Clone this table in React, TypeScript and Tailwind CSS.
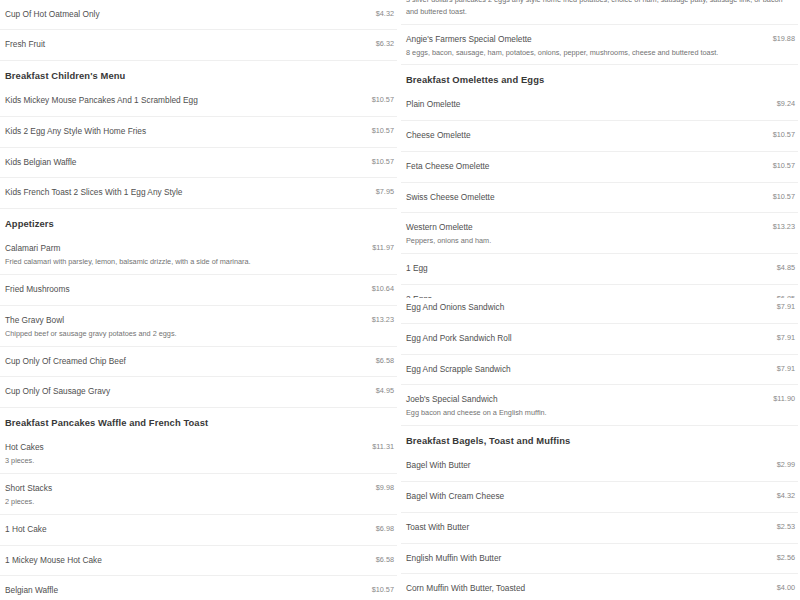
import React from 'react';

interface MenuItem {
  name: string;
  price: string;
  description?: string;
}

interface MenuBlock {
  title?: string;
  items: MenuItem[];
}

const leftBlocks: MenuBlock[] = [
  {
    items: [
      { name: 'Cup Of Hot Oatmeal Only', price: '$4.32' },
      { name: 'Fresh Fruit', price: '$6.32' },
    ],
  },
  {
    title: "Breakfast Children's Menu",
    items: [
      { name: 'Kids Mickey Mouse Pancakes And 1 Scrambled Egg', price: '$10.57' },
      { name: 'Kids 2 Egg Any Style With Home Fries', price: '$10.57' },
      { name: 'Kids Belgian Waffle', price: '$10.57' },
      { name: 'Kids French Toast 2 Slices With 1 Egg Any Style', price: '$7.95' },
    ],
  },
  {
    title: 'Appetizers',
    items: [
      {
        name: 'Calamari Parm',
        price: '$11.97',
        description: 'Fried calamari with parsley, lemon, balsamic drizzle, with a side of marinara.',
      },
      { name: 'Fried Mushrooms', price: '$10.64' },
      { name: 'The Gravy Bowl', price: '$13.23', description: 'Chipped beef or sausage gravy potatoes and 2 eggs.' },
      { name: 'Cup Only Of Creamed Chip Beef', price: '$6.58' },
      { name: 'Cup Only Of Sausage Gravy', price: '$4.95' },
    ],
  },
  {
    title: 'Breakfast Pancakes Waffle and French Toast',
    items: [
      { name: 'Hot Cakes', price: '$11.31', description: '3 pieces.' },
      { name: 'Short Stacks', price: '$9.98', description: '2 pieces.' },
      { name: '1 Hot Cake', price: '$6.98' },
      { name: '1 Mickey Mouse Hot Cake', price: '$6.58' },
      { name: 'Belgian Waffle', price: '$10.57' },
    ],
  },
];

const rightTopBlocks: MenuBlock[] = [
  {
    items: [
      {
        name: 'Silver Dollar Pancake Special',
        price: '$14.61',
        description:
          '3 silver dollars pancakes 2 eggs any style home fried potatoes, choice of ham, sausage patty, sausage link, or bacon and buttered toast.',
      },
      {
        name: "Angie's Farmers Special Omelette",
        price: '$19.88',
        description: '8 eggs, bacon, sausage, ham, potatoes, onions, pepper, mushrooms, cheese and buttered toast.',
      },
    ],
  },
  {
    title: 'Breakfast Omelettes and Eggs',
    items: [
      { name: 'Plain Omelette', price: '$9.24' },
      { name: 'Cheese Omelette', price: '$10.57' },
      { name: 'Feta Cheese Omelette', price: '$10.57' },
      { name: 'Swiss Cheese Omelette', price: '$10.57' },
      { name: 'Western Omelette', price: '$13.23', description: 'Peppers, onions and ham.' },
      { name: '1 Egg', price: '$4.85' },
      { name: '2 Eggs', price: '$6.85' },
    ],
  },
];

const rightBottomBlocks: MenuBlock[] = [
  {
    items: [
      { name: 'Egg And Onions Sandwich', price: '$7.91' },
      { name: 'Egg And Pork Sandwich Roll', price: '$7.91' },
      { name: 'Egg And Scrapple Sandwich', price: '$7.91' },
      { name: "Joeb's Special Sandwich", price: '$11.90', description: 'Egg bacon and cheese on a English muffin.' },
    ],
  },
  {
    title: 'Breakfast Bagels, Toast and Muffins',
    items: [
      { name: 'Bagel With Butter', price: '$2.99' },
      { name: 'Bagel With Cream Cheese', price: '$4.32' },
      { name: 'Toast With Butter', price: '$2.53' },
      { name: 'English Muffin With Butter', price: '$2.56' },
      { name: 'Corn Muffin With Butter, Toasted', price: '$4.00' },
    ],
  },
];

const MenuRow = ({ item }: { item: MenuItem }) => (
  <div className="border-b border-[#efefef] pl-[5px] pr-[3px] pt-[7px] pb-[8.8px]">
    <div className="flex items-center justify-between gap-4">
      <span className="text-[8.3px] leading-[14px] text-[#4f4f4f]">{item.name}</span>
      <span className="shrink-0 text-[7.3px] leading-[14px] text-[#888]">{item.price}</span>
    </div>
    {item.description && (
      <p className="mt-[1px] -mb-[3px] text-[7.3px] leading-[12px] text-[#737373]">{item.description}</p>
    )}
  </div>
);

const Block = ({ block }: { block: MenuBlock }) => (
  <div>
    {block.title && (
      <h2 className="pl-[5px] pt-[8px] pb-[3px] text-[9.4px] font-bold leading-[14px] tracking-[0.1px] text-[#383838]">
        {block.title}
      </h2>
    )}
    {block.items.map(item => (
      <MenuRow key={item.name} item={item} />
    ))}
  </div>
);

export default function App() {
  return (
    <div
      className="flex h-[600px] w-[800px] gap-[4px] overflow-hidden bg-white"
      style={{ fontFamily: '"Liberation Sans", Arial, sans-serif' }}
    >
      {/* Left column */}
      <div className="w-[397px] shrink-0 overflow-hidden">
        <div className="-mt-[0.5px]">
          {leftBlocks.map((block, i) => (
            <Block key={i} block={block} />
          ))}
        </div>
      </div>

      {/* Right column: two stitched segments */}
      <div className="flex w-[397px] shrink-0 flex-col">
        <div className="h-[298px] shrink-0 overflow-hidden">
          <div className="-mt-[28.3px]">
            {rightTopBlocks.map((block, i) => (
              <Block key={i} block={block} />
            ))}
          </div>
        </div>
        <div className="flex-1 overflow-hidden">
          <div className="-mt-[5px]">
            {rightBottomBlocks.map((block, i) => (
              <Block key={i} block={block} />
            ))}
          </div>
        </div>
      </div>
    </div>
  );
}
